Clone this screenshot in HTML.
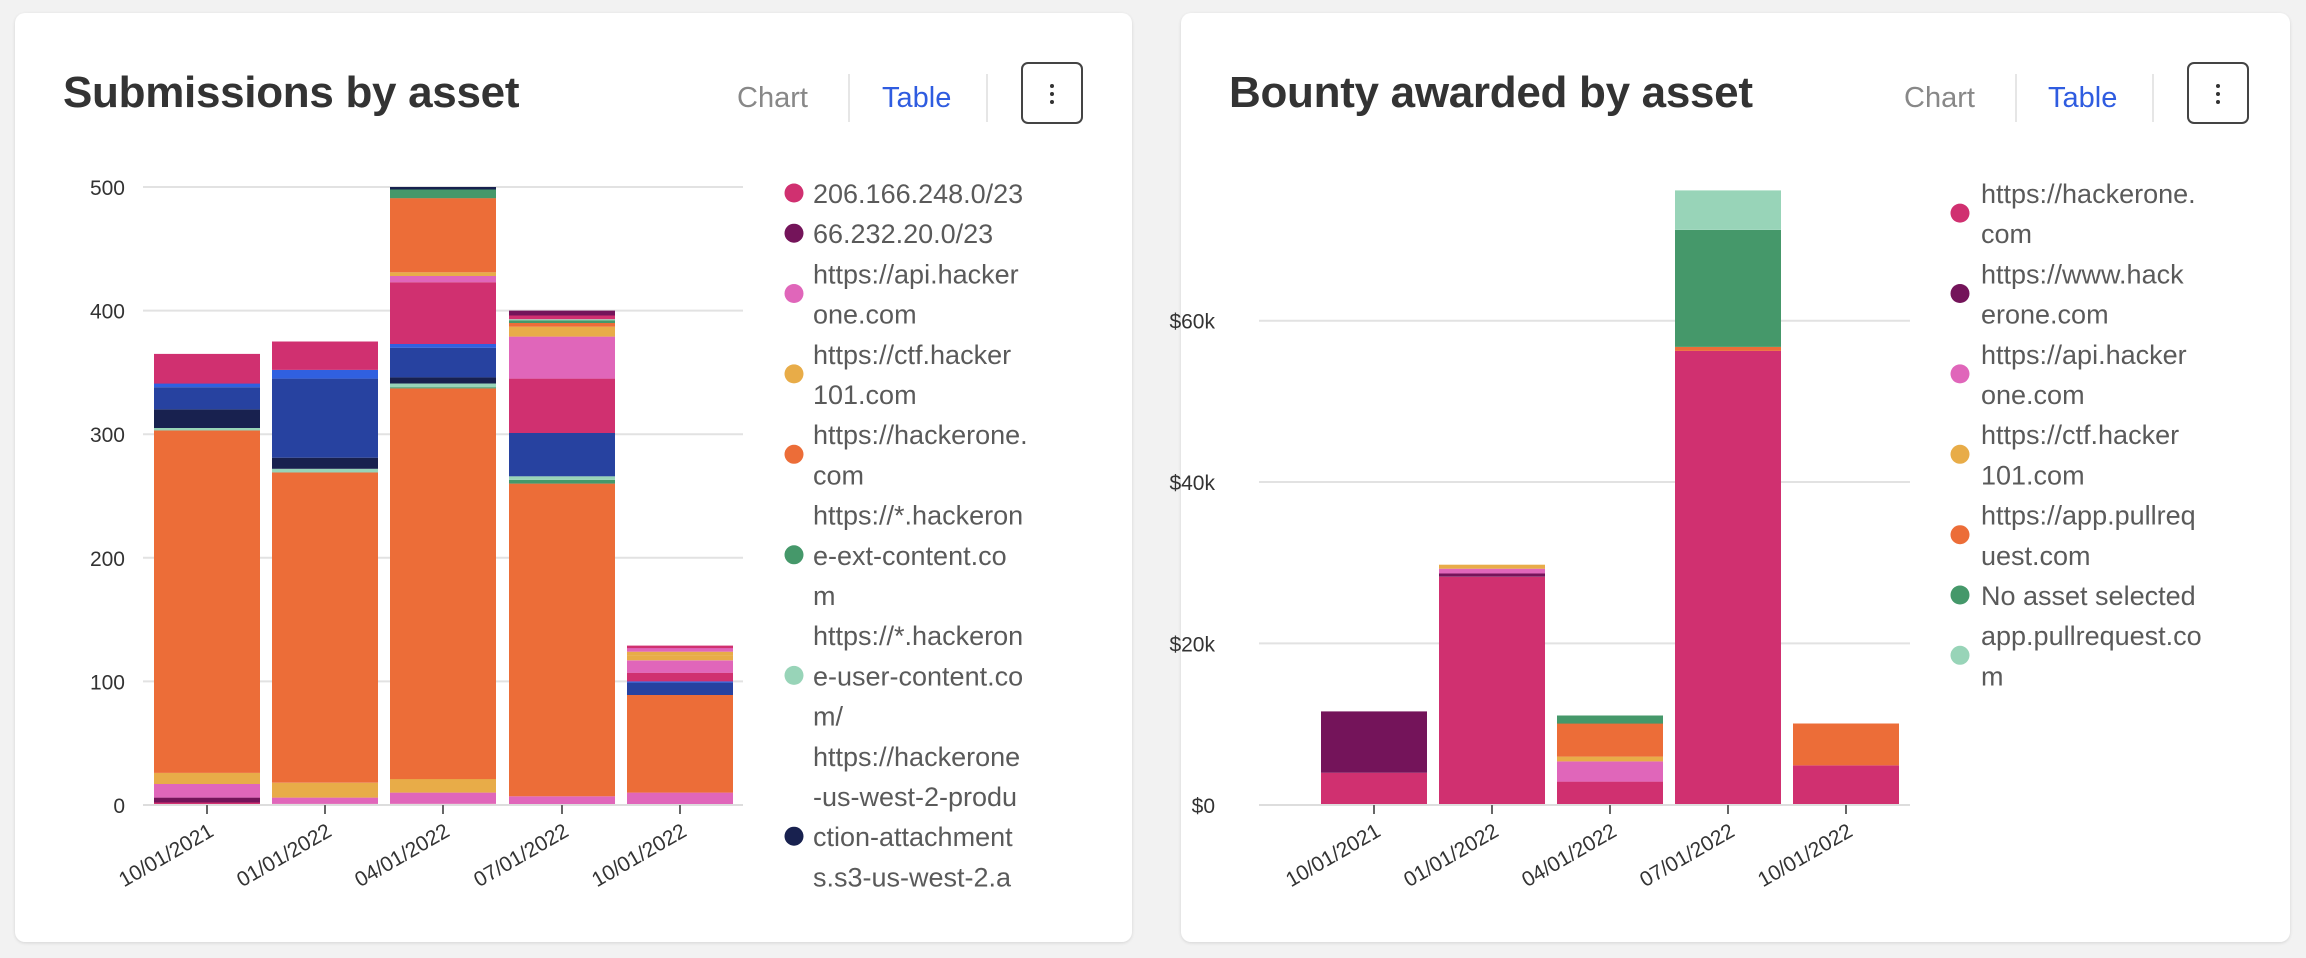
<!DOCTYPE html>
<html><head><meta charset="utf-8"><style>
html,body{margin:0;padding:0;background:#f2f2f2;width:2306px;height:958px;overflow:hidden;font-family:"Liberation Sans",sans-serif}
.card{position:absolute;top:13px;height:929px;background:#fff;border-radius:10px;box-shadow:0 1px 3px rgba(0,0,0,.12)}
.t{position:absolute;font-weight:bold;font-size:44px;color:#333;top:68px;letter-spacing:-0.3px}
.tab{position:absolute;top:82px;font-size:29px}
.div{position:absolute;top:74px;width:2px;height:48px;background:#e6e6e6}
.btn{position:absolute;top:62px;width:62px;height:62px;border:2px solid #444;border-radius:7px;box-sizing:border-box}
.btn i{position:absolute;left:27px;width:4px;height:4px;background:#333;border-radius:50%}
</style></head><body>
<div class="card" style="left:15px;width:1117px"></div>
<div class="card" style="left:1181px;width:1109px"></div>
<div class="t" style="left:63px">Submissions by asset</div>
<div class="t" style="left:1229px">Bounty awarded by asset</div>
<div class="tab" style="left:737px;color:#888">Chart</div>
<div class="div" style="left:848px"></div>
<div class="tab" style="left:882px;color:#2f5ce0">Table</div>
<div class="div" style="left:986px"></div>
<div class="btn" style="left:1021px"><i style="top:20px"></i><i style="top:28px"></i><i style="top:36px"></i></div>
<div class="tab" style="left:1904px;color:#888">Chart</div>
<div class="div" style="left:2015px"></div>
<div class="tab" style="left:2048px;color:#2f5ce0">Table</div>
<div class="div" style="left:2152px"></div>
<div class="btn" style="left:2187px"><i style="top:20px"></i><i style="top:28px"></i><i style="top:36px"></i></div>
<svg id="s" width="2306" height="958" style="position:absolute;left:0;top:0" font-family="Liberation Sans, sans-serif"></svg>
<script>
var C={r:'#D03070',p:'#74145A',k:'#E066BA',y:'#E8AC48',o:'#EC6D38',g:'#45986A',l:'#98D4B8',n:'#18214F',b:'#2742A0',c:'#3060E0'};
var s='';
function grid(x0,x1,ys,labels,lx){ys.forEach(function(y,i){s+='<line x1="'+x0+'" x2="'+x1+'" y1="'+y+'" y2="'+y+'" stroke="#e2e2e2" stroke-width="2"/>';s+='<text x="'+lx+'" y="'+(y+8)+'" text-anchor="end" font-size="21" fill="#333">'+labels[i]+'</text>';});}
function bars(xs,w,base,scale,data){data.forEach(function(d,i){var x=xs[i],prev=0;d.forEach(function(seg){var v=seg[1];var y1=base-v*scale,y0=base-prev*scale;s+='<rect x="'+x+'" y="'+y1.toFixed(1)+'" width="'+w+'" height="'+(y0-y1).toFixed(1)+'" fill="'+C[seg[0]]+'"/>';prev=v;});});}
function xl(xs,w,base){var L=['10/01/2021','01/01/2022','04/01/2022','07/01/2022','10/01/2022'];xs.forEach(function(x,i){var cx=x+w/2;s+='<line x1="'+cx+'" x2="'+cx+'" y1="'+base+'" y2="'+(base+9)+'" stroke="#666" stroke-width="2"/>';s+='<text transform="translate('+(cx+8)+','+(base+30)+') rotate(-30)" text-anchor="end" font-size="21" fill="#333">'+L[i]+'</text>';});}
var base=805,sc=1.236;
grid(143,743,[187,310.6,434.2,557.8,681.4,805],['500','400','300','200','100','0'],125);
var xs=[154,272,390,509,627];
bars(xs,106,base,sc,[
[['r',2],['p',6],['k',17],['y',26],['o',303],['l',305],['n',320],['b',338],['c',341],['r',365]],
[['r',1],['k',6],['y',18],['o',269],['l',272],['n',281],['b',345],['c',352],['r',375]],
[['r',1],['k',10],['y',21],['o',337],['g',338],['l',341],['n',346],['b',370],['c',373],['r',423],['k',428],['y',431],['o',491],['g',498],['n',500]],
[['k',7],['o',260],['g',263],['l',266],['b',301],['r',345],['k',379],['y',387],['o',390],['g',392],['l',393],['r',396],['p',400]],
[['k',10],['o',89],['b',99],['c',100],['r',107],['k',117],['y',121],['y',124],['k',127],['r',129]]]);
s+='<line x1="143" x2="743" y1="805" y2="805" stroke="#ddd" stroke-width="2"/>';
xl(xs,106,base);
var b2=805,s2=8.065;
grid(1259,1910,[320.7,482,643.4],['$60k','$40k','$20k'],1215);
s+='<text x="1215" y="813" text-anchor="end" font-size="21" fill="#333">$0</text>';
var xs2=[1321,1439,1557,1675,1793];
bars(xs2,106,b2,s2,[
[['r',4],['p',11.6]],
[['r',28.3],['p',28.7],['k',29.3],['y',29.8]],
[['r',2.9],['k',5.4],['y',6],['o',10.1],['g',11.1]],
[['r',56.3],['o',56.8],['g',71.3],['l',76.2]],
[['r',4.9],['o',10.1]]]);
s+='<line x1="1259" x2="1910" y1="805" y2="805" stroke="#ddd" stroke-width="2"/>';
xl(xs2,106,b2);
function leg(tx,dx,lines,dots){lines.forEach(function(t,i){s+='<text x="'+tx+'" y="'+(193+40.2*i+10)+'" font-size="27" fill="#5a5a5a">'+t+'</text>';});dots.forEach(function(d){s+='<circle cx="'+dx+'" cy="'+(193+40.2*d[0])+'" r="9.5" fill="'+C[d[1]]+'"/>';});}
leg(813,794,['206.166.248.0/23','66.232.20.0/23','https://api.hacker','one.com','https://ctf.hacker','101.com','https://hackerone.','com','https://*.hackeron','e-ext-content.co','m','https://*.hackeron','e-user-content.co','m/','https://hackerone','-us-west-2-produ','ction-attachment','s.s3-us-west-2.a'],
[[0,'r'],[1,'p'],[2.5,'k'],[4.5,'y'],[6.5,'o'],[9,'g'],[12,'l'],[16,'n']]);
leg(1981,1960,['https://hackerone.','com','https://www.hack','erone.com','https://api.hacker','one.com','https://ctf.hacker','101.com','https://app.pullreq','uest.com','No asset selected','app.pullrequest.co','m'],
[[0.5,'r'],[2.5,'p'],[4.5,'k'],[6.5,'y'],[8.5,'o'],[10,'g'],[11.5,'l']]);
document.getElementById('s').innerHTML=s;
</script>
</body></html>
